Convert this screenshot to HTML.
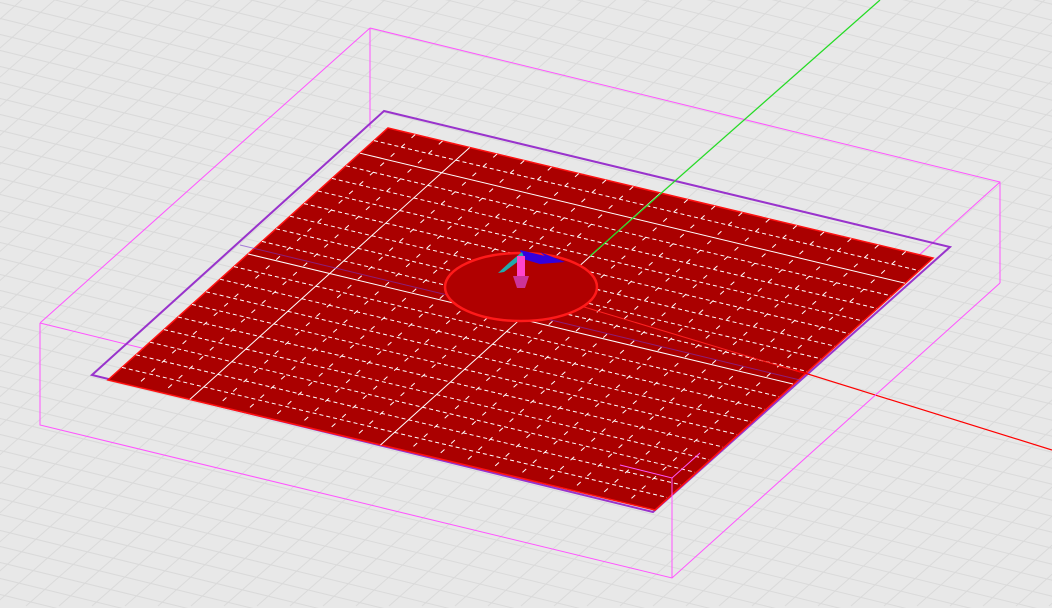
<!DOCTYPE html>
<html><head><meta charset="utf-8"><style>
html,body{margin:0;padding:0;background:#e8e8e8;overflow:hidden;width:1052px;height:608px}
svg{display:block}
</style></head><body>
<svg id="s" width="1052" height="608" viewBox="0 0 1052 608" xmlns="http://www.w3.org/2000/svg">
<rect width="1052" height="608" fill="#e8e8e8"/>
<g id="bg" stroke="#dadada" stroke-width="1" fill="none"></g>
<g stroke="#ff55ff" stroke-width="1" fill="none">
<polyline points="370,28 1000,182 1000,283"/>
<line x1="370" y1="28" x2="370" y2="128"/>
<line x1="370" y1="28" x2="40" y2="323"/>
<polyline points="40,323 672,478 1000,182"/>
</g>
<polygon points="384,111 950,247 653,512 92,375" fill="none" stroke="#9933cc" stroke-width="2"/>
<polygon points="388,128 933,258 655,510 108,380" fill="#aa0000" stroke="#ff1111" stroke-width="1.5"/>
<g id="pg" stroke="#ffffff" fill="none"></g>
<line x1="240" y1="245" x2="800" y2="380" stroke="#7733cc" stroke-width="1" opacity="0.6"/>
<line x1="521" y1="288" x2="800" y2="372" stroke="#ff2222" stroke-width="1"/>
<g stroke="#ff55ff" stroke-width="1" fill="none">
<polyline points="620,465 672,478 700,453"/>
</g>
<line x1="880" y1="0" x2="590" y2="256" stroke="#22dd22" stroke-width="1.2"/>
<line x1="795" y1="370" x2="1052" y2="450" stroke="#ff0000" stroke-width="1.2"/>
<ellipse cx="521" cy="287" rx="76" ry="34" fill="#b00000" stroke="#ff1a1a" stroke-width="2.5"/>
<polygon points="520,250 545,256 540,252 565,262 540,264 523,259" fill="#3300dd"/>
<polygon points="522,252 524,257 504,272 498,273 510,262" fill="#22aaaa"/>
<rect x="517" y="256" width="8" height="22" fill="#ff44cc"/>
<polygon points="513,276 529,276 525,288 517,288" fill="#cc3399"/>
<g stroke="#ff55ff" stroke-width="1" fill="none">
<polyline points="40,323 40,425 672,578 1000,283"/>
<line x1="672" y1="478" x2="672" y2="578"/>
</g>
</svg>
<script>
var NS="http://www.w3.org/2000/svg";
function L(g,x1,y1,x2,y2,a){var l=document.createElementNS(NS,"line");l.setAttribute("x1",x1);l.setAttribute("y1",y1);l.setAttribute("x2",x2);l.setAttribute("y2",y2);for(var k in a)l.setAttribute(k,a[k]);g.appendChild(l);}
var bg=document.getElementById("bg");
for(var i=-60;i<60;i++){var y=i*16;L(bg,-10,y,1070,y+1080*0.245,{});}
for(var i=-5;i<60;i++){var x=i*33;L(bg,x,-10,x-700,-10+700*0.88,{});}
var pg=document.getElementById("pg");
var A=[388,128],B=[933,258],D=[108,380];
function P(u,v){return [A[0]+u*(B[0]-A[0])+v*(D[0]-A[0]),A[1]+u*(B[1]-A[1])+v*(D[1]-A[1])];}
var N=20,M=20;
for(var j=1;j<M;j++){var v=j/M,p=P(0,v),q=P(1,v);L(pg,p[0],p[1],q[0],q[1],(j==2||j==10)?{"stroke-width":"1"}:{"stroke-width":"1","stroke-dasharray":"4 3"});}
for(var j=1;j<N;j++){var u=j/N,p=P(u,0),q=P(u,1);L(pg,p[0],p[1],q[0],q[1],(j==3||j==10)?{"stroke-width":"1"}:{"stroke-width":"1","stroke-dasharray":"5 9"});}
</script>
</body></html>
